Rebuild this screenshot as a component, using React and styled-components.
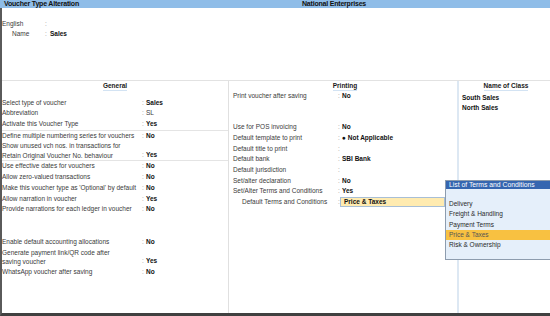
import React from 'react';
import styled, { createGlobalStyle } from 'styled-components';

const GlobalStyle = createGlobalStyle`
  html, body {
    margin: 0;
    padding: 0;
    background: #ffffff;
  }
  body {
    font-family: "Liberation Sans", Arial, sans-serif;
  }
`;

const Screen = styled.div`
  position: relative;
  width: 550px;
  height: 316px;
  overflow: hidden;
  display: flex;
  flex-direction: column;
  font-size: 6.5px;
  color: #3a3a3a;
`;

const TitleBar = styled.div`
  height: 8px;
  flex: none;
  background: #8fbde8;
  display: grid;
  grid-template-columns: 229px 210px 1fr;
  align-items: center;
  font-size: 7px;
  font-weight: 700;
  letter-spacing: -0.2px;
  line-height: 8px;
  color: #111111;
`;

const TitleText = styled.span`
  padding-left: ${(p) => (p.$center ? 0 : 4)}px;
  text-align: ${(p) => (p.$center ? 'center' : 'left')};
`;

const Body = styled.div`
  flex: 1;
  min-height: 0;
  display: flex;
  flex-direction: column;
  border-left: 2px solid #5a5a5a;
  border-bottom: 3px solid #404040;
`;

const Masthead = styled.div`
  height: 73px;
  flex: none;
  box-sizing: border-box;
  padding-top: 11px;
  border-bottom: 1px solid #e2e2e2;
`;

const MastRow = styled.div`
  display: grid;
  grid-template-columns: ${(p) => (p.$indent ? '33px' : '43px')} 5px 1fr;
  padding-left: ${(p) => (p.$indent ? 10 : 0)}px;
  line-height: 10px;
`;

const Columns = styled.div`
  flex: 1;
  min-height: 0;
  display: grid;
  grid-template-columns: 226px 229px 1fr;
`;

const Column = styled.div`
  display: flex;
  flex-direction: column;
  border-left: ${(p) => p.$border || 'none'};
  padding-left: ${(p) => p.$pad || 0}px;
`;

const Heading = styled.div`
  text-align: center;
  height: ${(p) => p.$height}px;
  padding-top: ${(p) => p.$top || 1}px;
  box-sizing: border-box;
  flex: none;

  span {
    display: inline-block;
    line-height: 8px;
    font-weight: 700;
    color: #1a1a1a;
    border-bottom: 1px solid #d3e3f3;
  }
`;

const Group = styled.div`
  border-top: ${(p) => (p.$rule ? '1px solid #e4e4e4' : 'none')};
  margin-top: ${(p) => p.$gap || 0}px;
`;

const Row = styled.div`
  display: grid;
  grid-template-columns: ${(p) => p.$label}px 4px 1fr;
  align-items: end;
  line-height: 10.7px;
  padding-left: ${(p) => p.$indent || 0}px;
`;

const Label = styled.div`
  line-height: ${(p) => (p.$multi ? '9.5px' : '10.7px')};
  white-space: nowrap;
`;

const Colon = styled.span`
  color: #9a9a9a;
`;

const Value = styled.span`
  font-weight: ${(p) => (p.$plain ? 400 : 700)};
  color: ${(p) => (p.$plain ? '#3a3a3a' : '#111111')};
`;

const InputBox = styled.div`
  margin-left: -2px;
  width: 100px;
  height: 8px;
  margin-bottom: 1px;
  line-height: 8px;
  padding-left: 3px;
  background: #ffebb0;
  border: 1px solid #a8bfd6;
  font-weight: 700;
  color: #111111;
`;

const ClassItem = styled.div`
  line-height: 9.5px;
  font-weight: 700;
  color: #111111;
`;

const Popup = styled.div`
  position: absolute;
  left: 445px;
  top: 180px;
  width: 108px;
  height: 80px;
  box-sizing: border-box;
  border: 1px solid #8d9cae;
  background: #e5effa;
`;

const PopupTitle = styled.div`
  height: 8px;
  line-height: 8px;
  padding-left: 3px;
  background: #3566b0;
  color: #ffffff;
  font-size: 6.8px;
`;

const PopupList = styled.div`
  padding-top: 10px;
`;

const PopupItem = styled.div`
  line-height: 10.3px;
  padding-left: 3px;
  color: ${(p) => (p.$active ? '#555555' : '#2a2a2a')};
  background: ${(p) => (p.$active ? '#f8c141' : 'transparent')};
`;

const FieldRow = ({ label, value, plain, multi, width, indent }) => (
  <Row $label={width} $indent={indent}>
    <Label $multi={multi}>{label}</Label>
    <Colon>:</Colon>
    {value ? <Value $plain={plain}>{value}</Value> : <span />}
  </Row>
);

const terms = ['Delivery', 'Freight & Handling', 'Payment Terms', 'Price & Taxes', 'Risk & Ownership'];

export default function App() {
  const g = 140;
  const p = 105;
  return (
    <Screen>
      <GlobalStyle />
      <TitleBar>
        <TitleText>Voucher Type Alteration</TitleText>
        <TitleText $center>National Enterprises</TitleText>
      </TitleBar>
      <Body>
        <Masthead>
          <MastRow>
            <span>English</span>
            <Colon>:</Colon>
            <span />
          </MastRow>
          <MastRow $indent>
            <span>Name</span>
            <Colon>:</Colon>
            <Value>Sales</Value>
          </MastRow>
        </Masthead>
        <Columns>
          <Column>
            <Heading $height={16.6}>
              <span>General</span>
            </Heading>
            <Group>
              <FieldRow width={g} label="Select type of voucher" value="Sales" />
              <FieldRow width={g} label="Abbreviation" value="SL" plain />
              <FieldRow width={g} label="Activate this Voucher Type" value="Yes" />
            </Group>
            <Group $rule>
              <FieldRow width={g} label="Define multiple numbering series for vouchers" value="No" />
              <FieldRow
                width={g}
                multi
                label={
                  <>
                    Show unused vch nos. in transactions for
                    <br />
                    Retain Original Voucher No. behaviour
                  </>
                }
                value="Yes"
              />
            </Group>
            <Group $rule>
              <FieldRow width={g} label="Use effective dates for vouchers" value="No" />
              <FieldRow width={g} label="Allow zero-valued transactions" value="No" />
              <FieldRow width={g} label="Make this voucher type as 'Optional' by default" value="No" />
              <FieldRow width={g} label="Allow narration in voucher" value="Yes" />
              <FieldRow width={g} label="Provide narrations for each ledger in voucher" value="No" />
            </Group>
            <Group $gap={22}>
              <FieldRow width={g} label="Enable default accounting allocations" value="No" />
              <FieldRow
                width={g}
                multi
                label={
                  <>
                    Generate payment link/QR code after
                    <br />
                    saving voucher
                  </>
                }
                value="Yes"
              />
              <FieldRow width={g} label="WhatsApp voucher after saving" value="No" />
            </Group>
          </Column>

          <Column $border="1px solid #e0e0e0" $pad={4}>
            <Heading $height={10}>
              <span>Printing</span>
            </Heading>
            <Group>
              <FieldRow width={p} label="Print voucher after saving" value="No" />
            </Group>
            <Group $gap={20.4}>
              <FieldRow width={p} label="Use for POS invoicing" value="No" />
              <FieldRow width={p} label="Default template to print" value="● Not Applicable" />
              <FieldRow width={p} label="Default title to print" />
              <FieldRow width={p} label="Default bank" value="SBI Bank" />
              <FieldRow width={p} label="Default jurisdiction" />
              <FieldRow width={p} label="Set/alter declaration" value="No" />
              <FieldRow width={p} label="Set/Alter Terms and Conditions" value="Yes" />
              <Row $label={p - 9} $indent={9}>
                <Label>Default Terms and Conditions</Label>
                <Colon>:</Colon>
                <InputBox>Price &amp; Taxes</InputBox>
              </Row>
            </Group>
          </Column>

          <Column $border="2px solid #dde8f3" $pad={3}>
            <Heading $height={12.3} $top={0}>
              <span>Name of Class</span>
            </Heading>
            <ClassItem>South Sales</ClassItem>
            <ClassItem>North Sales</ClassItem>
          </Column>
        </Columns>
      </Body>

      <Popup>
        <PopupTitle>List of Terms and Conditions</PopupTitle>
        <PopupList>
          {terms.map((t) => (
            <PopupItem key={t} $active={t === 'Price & Taxes'}>
              {t}
            </PopupItem>
          ))}
        </PopupList>
      </Popup>
    </Screen>
  );
}
